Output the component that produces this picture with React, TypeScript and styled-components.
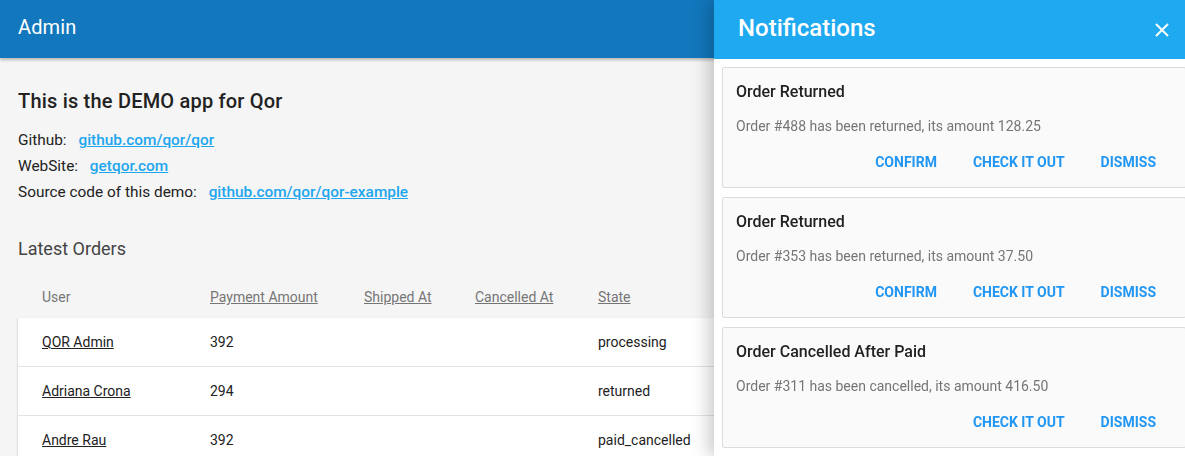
import styled, {createGlobalStyle} from 'styled-components'
import {FC} from 'react'

const GlobalStyle = createGlobalStyle`
  html, body {
    margin: 0;
    padding: 0;
    height: 100%;
    overflow: hidden;
  }
  body {
    background: #f5f5f5;
    font-family: Roboto, "Liberation Sans", Arial, sans-serif;
    color: #222;
  }
`

type Order = {user: string, amount: string, shipped: string, cancelled: string, state: string}

const orders: Order[] = [
    {user: 'QOR Admin', amount: '392', shipped: '', cancelled: '', state: 'processing'},
    {user: 'Adriana Crona', amount: '294', shipped: '', cancelled: '', state: 'returned'},
    {user: 'Andre Rau', amount: '392', shipped: '', cancelled: '', state: 'paid_cancelled'},
]

type Note = {title: string, text: string, confirm: boolean}

const notes: Note[] = [
    {title: 'Order Returned', text: 'Order #488 has been returned, its amount 128.25', confirm: true},
    {title: 'Order Returned', text: 'Order #353 has been returned, its amount 37.50', confirm: true},
    {title: 'Order Cancelled After Paid', text: 'Order #311 has been cancelled, its amount 416.50', confirm: false},
]

const App: FC = () => {
    return <>
        <GlobalStyle/>
        <Header><Brand>Admin</Brand></Header>
        <Main>
            <Title>This is the DEMO app for Qor</Title>
            <InfoLine>Github: <Link>github.com/qor/qor</Link></InfoLine>
            <InfoLine>WebSite: <Link>getqor.com</Link></InfoLine>
            <InfoLine>Source code of this demo: <Link>github.com/qor/qor-example</Link></InfoLine>
            <SectionTitle>Latest Orders</SectionTitle>
            <Table>
                <HeadRow>
                    <HeadCell>User</HeadCell>
                    <HeadCell $sortable>Payment Amount</HeadCell>
                    <HeadCell $sortable>Shipped At</HeadCell>
                    <HeadCell $sortable>Cancelled At</HeadCell>
                    <HeadCell $sortable>State</HeadCell>
                </HeadRow>
                {orders.map((o, i) => <Row key={i}>
                    <Cell><UserLink>{o.user}</UserLink></Cell>
                    <Cell>{o.amount}</Cell>
                    <Cell>{o.shipped}</Cell>
                    <Cell>{o.cancelled}</Cell>
                    <Cell>{o.state}</Cell>
                </Row>)}
            </Table>
        </Main>
        <Panel>
            <PanelHeader>
                <PanelTitle>Notifications</PanelTitle>
                <CloseButton aria-label="close">
                    <svg width="14" height="14" viewBox="0 0 14 14">
                        <path d="M1 1L13 13M13 1L1 13" stroke="#fff" strokeWidth="2" fill="none"/>
                    </svg>
                </CloseButton>
            </PanelHeader>
            <PanelBody>
                {notes.map((n, i) => <Card key={i}>
                    <CardTitle>{n.title}</CardTitle>
                    <CardText>{n.text}</CardText>
                    <Actions>
                        {n.confirm && <ActionButton>Confirm</ActionButton>}
                        <ActionButton>Check it out</ActionButton>
                        <ActionButton>Dismiss</ActionButton>
                    </Actions>
                </Card>)}
            </PanelBody>
        </Panel>
    </>
}

export default App

const Header = styled.header`
  height: 58px;
  background: #1277bc;
  display: flex;
  align-items: center;
  padding: 0 18px 4px;
  box-sizing: border-box;
  box-shadow: 0 2px 3px rgba(0, 0, 0, 0.25);
  position: relative;
`

const Brand = styled.div`
  color: #fff;
  font-size: 20px;
  font-weight: 400;
  letter-spacing: 0.1px;
`

const Main = styled.main`
  padding: 31px 0 0 18px;
`

const Title = styled.h1`
  margin: 0 0 14px;
  font-size: 20px;
  font-weight: 500;
  line-height: 24px;
  letter-spacing: 0.2px;
  color: #222;
`

const InfoLine = styled.div`
  font-size: 15.4px;
  line-height: 26px;
  color: #222;
`

const Link = styled.a`
  color: #1ea6ee;
  font-weight: 500;
  text-decoration: underline;
  margin-left: 8px;
  cursor: pointer;
`

const SectionTitle = styled.h2`
  margin: 32px 0 0;
  font-size: 18px;
  font-weight: 400;
  line-height: 24px;
  color: #444;
`

const Table = styled.div`
  margin-top: 15px;
`

const gridCols = '168px 154px 111px 123px 1fr'

const HeadRow = styled.div`
  display: grid;
  grid-template-columns: ${gridCols};
  padding-left: 24px;
  height: 42px;
  align-items: center;
`

const HeadCell = styled.div<{ $sortable?: boolean }>`
  font-size: 14px;
  color: #757575;
  text-decoration: ${p => p.$sortable ? 'underline' : 'none'};
`

const Row = styled.div`
  display: grid;
  grid-template-columns: ${gridCols};
  padding-left: 24px;
  height: 48px;
  align-items: center;
  background: #fff;
  border-bottom: 1px solid #e6e6e6;
  box-shadow: -1px 0 1px rgba(0, 0, 0, 0.08);
`

const Cell = styled.div`
  font-size: 14px;
  color: #222;
`

const UserLink = styled.a`
  color: #222;
  text-decoration: underline;
  cursor: pointer;
`

const Panel = styled.aside`
  position: fixed;
  top: 0;
  left: 714px;
  width: 480px;
  height: 100%;
  background: #fff;
  box-shadow: -6px 0 16px rgba(0, 0, 0, 0.2);
  display: flex;
  flex-direction: column;
`

const PanelHeader = styled.div`
  height: 59px;
  box-sizing: border-box;
  background: #1ea9f0;
  display: flex;
  align-items: center;
  justify-content: space-between;
  padding: 0 0 4px 24px;
  flex-shrink: 0;
`

const PanelTitle = styled.div`
  color: #fff;
  font-size: 24px;
  font-weight: 500;
`

const CloseButton = styled.button`
  background: none;
  border: 0;
  padding: 0;
  margin: 4px 25px 0 0;
  width: 14px;
  height: 14px;
  display: flex;
  cursor: pointer;
`

const PanelBody = styled.div`
  padding: 8px 8px;
  display: flex;
  flex-direction: column;
  gap: 9px;
`

const Card = styled.div`
  background: #fafafa;
  border: 1px solid #dcdcdc;
  border-radius: 2px;
  padding: 14px 13px 7px;
`

const CardTitle = styled.div`
  font-size: 16px;
  font-weight: 500;
  line-height: 20px;
  color: #222;
`

const CardText = styled.div`
  margin-top: 14px;
  font-size: 14px;
  line-height: 20px;
  color: #757575;
`

const Actions = styled.div`
  margin-top: 8px;
  display: flex;
  justify-content: flex-end;
  gap: 4px;
`

const ActionButton = styled.button`
  height: 36px;
  padding: 0 16px;
  background: none;
  border: 0;
  font-family: inherit;
  font-size: 14px;
  font-weight: 700;
  text-transform: uppercase;
  color: #2196f3;
  cursor: pointer;
`
